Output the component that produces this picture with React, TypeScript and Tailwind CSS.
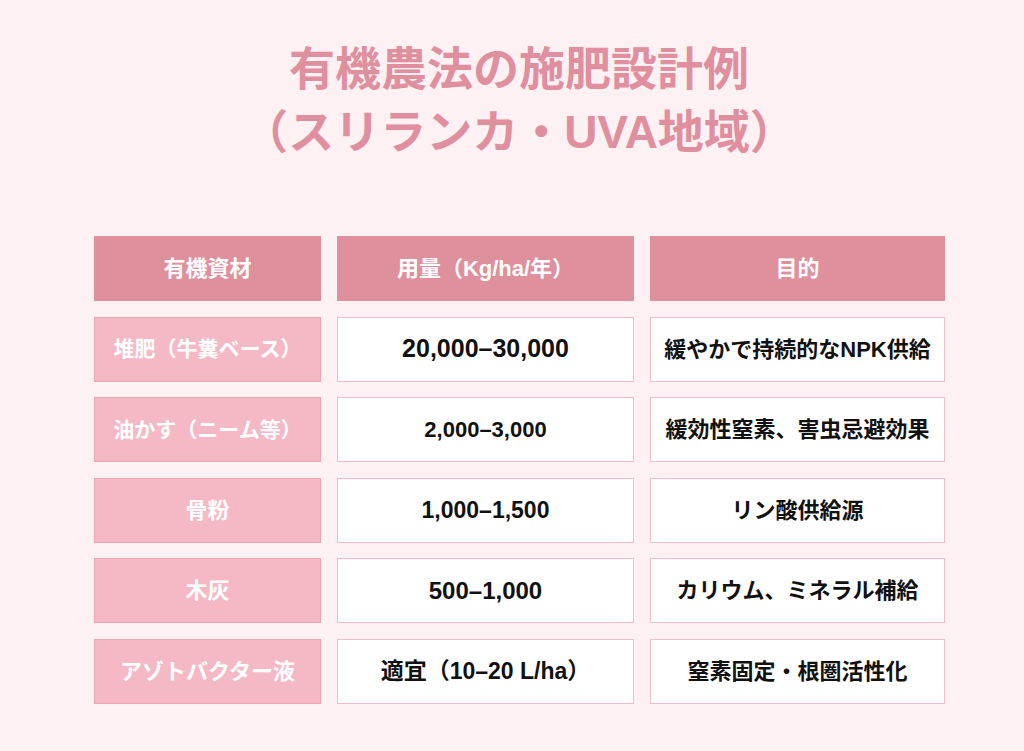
const headers = ["有機資材", "用量（Kg/ha/年）", "目的"];

const rows = [
  { name: "堆肥（牛糞ベース）", nameSize: "text-[21px]", amount: "20,000–30,000", amountSize: "text-[25px]", purpose: "緩やかで持続的なNPK供給" },
  { name: "油かす（ニーム等）", nameSize: "text-[21px]", amount: "2,000–3,000", amountSize: "text-[22px]", purpose: "緩効性窒素、害虫忌避効果" },
  { name: "骨粉", nameSize: "text-[22px]", amount: "1,000–1,500", amountSize: "text-[23px]", purpose: "リン酸供給源" },
  { name: "木灰", nameSize: "text-[22px]", amount: "500–1,000", amountSize: "text-[24px]", purpose: "カリウム、ミネラル補給" },
  { name: "アゾトバクター液", nameSize: "text-[22px]", amount: "適宜（10–20 L/ha）", amountSize: "text-[23px]", purpose: "窒素固定・根圏活性化" },
];

export default function App() {
  return (
    <div
      className="h-[751px] w-full overflow-hidden bg-[#fdf1f4]"
      style={{ fontFamily: '"Liberation Sans", "Noto Sans CJK JP", sans-serif' }}
    >
      <h1 className="pl-[14px] pt-[38px] text-center text-[46px] font-bold leading-[63px] text-[#df8f9e]">
        有機農法の施肥設計例
        <br />
        （スリランカ・UVA地域）
      </h1>

      <div className="ml-[94px] mt-[72px] grid grid-cols-[227px_297px_295px] gap-x-4 gap-y-[15.6px]">
        {headers.map((h) => (
          <div
            key={h}
            className="flex h-[65px] items-center justify-center bg-[#de909c] text-[22px] font-bold text-white"
          >
            {h}
          </div>
        ))}
        {rows.map((r) => (
          <div key={r.name} className="contents">
            <div
              className={`flex h-[65px] items-center justify-center border border-[#eba5b3] bg-[#f5b9c5] font-bold text-white ${r.nameSize}`}
            >
              {r.name}
            </div>
            <div
              className={`flex h-[65px] items-center justify-center border border-[#f2bcc8] bg-white font-bold text-[#111] ${r.amountSize}`}
            >
              {r.amount}
            </div>
            <div className="flex h-[65px] items-center justify-center border border-[#f2bcc8] bg-white text-[22px] font-bold text-[#111]">
              {r.purpose}
            </div>
          </div>
        ))}
      </div>
    </div>
  );
}
